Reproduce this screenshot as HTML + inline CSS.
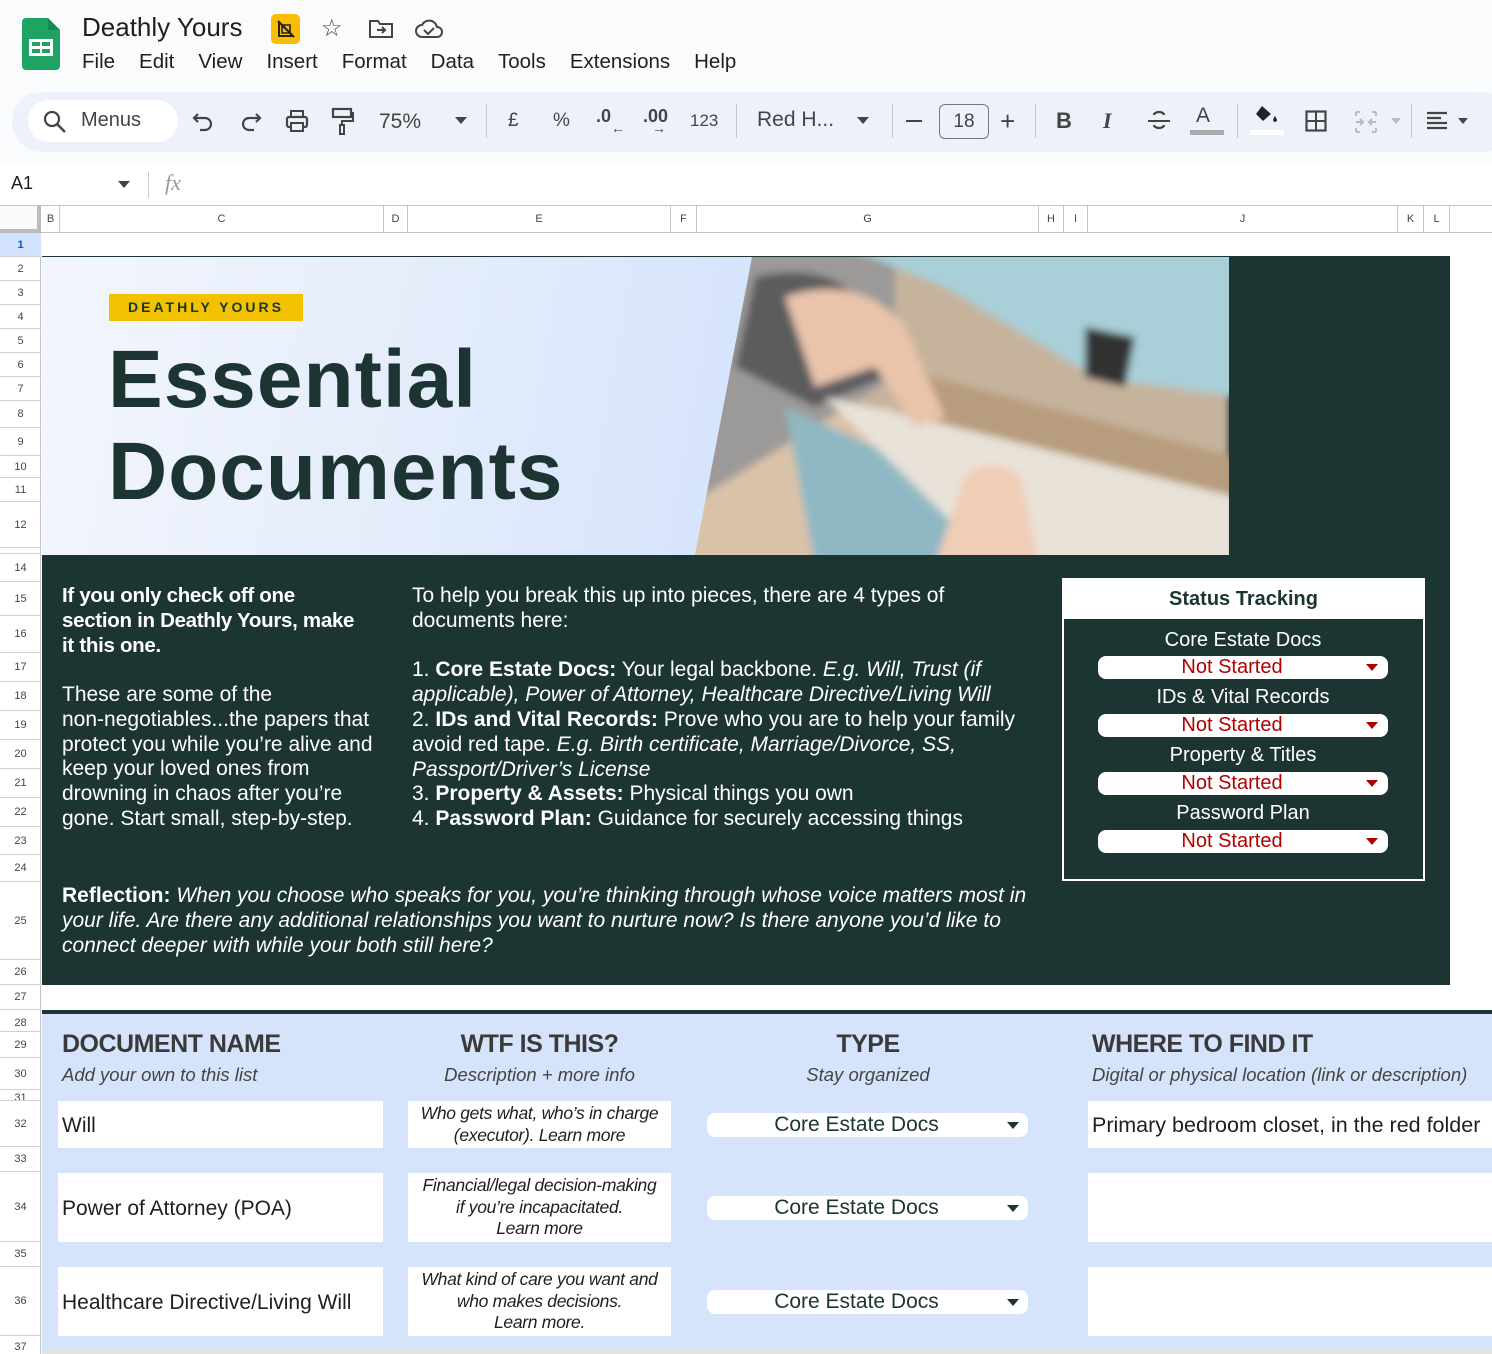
<!DOCTYPE html>
<html><head><meta charset="utf-8"><style>
*{margin:0;padding:0;box-sizing:border-box}
body{width:1492px;height:1354px;overflow:hidden;background:#f9fbfd;font-family:"Liberation Sans",sans-serif;position:relative;color:#1f1f1f}
.a{position:absolute}
.rh{position:absolute;left:0;width:41px;font-size:11px;color:#444;text-align:center;border-bottom:1px solid #d0d0d0}
.ch{position:absolute;top:206px;height:27px;font-size:11px;color:#444;text-align:center;line-height:27px;border-right:1px solid #c8c8c8}
.wt{color:#fff;font-size:21px;line-height:24.8px;white-space:nowrap}
.dd{position:absolute;left:1098px;width:290px;height:23px;background:#fff;border-radius:8px;color:#b00000;font-size:20px;text-align:center;line-height:23px;padding-right:22px}
.dd:after{content:"";position:absolute;right:10px;top:8px;border-left:6px solid transparent;border-right:6px solid transparent;border-top:7px solid #b00000}
.st{position:absolute;left:1064px;width:358px;text-align:center;color:#fff;font-size:20px}
.cell{position:absolute;background:#fff}
.td{position:absolute;left:707px;width:321px;height:24px;background:#fff;border-radius:8px;color:#1c3432;font-size:21px;text-align:center;line-height:24px;padding-right:22px}
.td:after{content:"";position:absolute;right:9px;top:9px;border-left:6px solid transparent;border-right:6px solid transparent;border-top:7px solid #1c3432}
.it{font-style:italic}
.hd{font-weight:bold;font-size:25px;color:#3a3a3a;letter-spacing:-0.5px}
.sub{font-style:italic;font-size:18.5px;color:#444}
.desc{font-size:17.5px;line-height:21.5px;text-align:center;padding-top:2px;letter-spacing:-0.3px;white-space:nowrap;font-style:italic}
</style></head><body>
<svg class="a" style="left:22px;top:18px" width="38" height="52" viewBox="0 0 38 52"><path d="M4 0h22l12 12v36a4 4 0 0 1-4 4H4a4 4 0 0 1-4-4V4a4 4 0 0 1 4-4z" fill="#1ea362"/><path d="M26 0l12 12H26z" fill="#178a51"/><rect x="7" y="21" width="24" height="17" fill="#fff"/><rect x="10" y="24" width="8" height="4" fill="#1ea362"/><rect x="20" y="24" width="8" height="4" fill="#1ea362"/><rect x="10" y="31" width="8" height="4" fill="#1ea362"/><rect x="20" y="31" width="8" height="4" fill="#1ea362"/></svg>
<div class="a" style="left:82px;top:12px;font-size:26px;color:#1f1f1f">Deathly Yours</div>
<div class="a" style="left:271px;top:14px;width:29px;height:30px;background:#fbbc04;border-radius:5px"></div>
<svg class="a" style="left:276px;top:19px" width="20" height="20" viewBox="0 0 20 20"><path d="M3 3v14h14" fill="none" stroke="#222" stroke-width="2"/><path d="M6 6h8v8H6z" fill="none" stroke="#222" stroke-width="1.6"/><path d="M2 2l16 16" stroke="#222" stroke-width="2"/></svg>
<div class="a" style="left:321px;top:14px;font-size:24px;color:#444">☆</div>
<svg class="a" style="left:368px;top:18px" width="26" height="22" viewBox="0 0 26 22"><path d="M2 3h8l2 3h12v13H2z" fill="none" stroke="#444" stroke-width="2"/><path d="M9 12h8M14 9l3 3-3 3" fill="none" stroke="#444" stroke-width="2"/></svg>
<svg class="a" style="left:414px;top:18px" width="30" height="22" viewBox="0 0 30 22"><path d="M8 19a6 6 0 0 1 0-12 8 8 0 0 1 15 2 5 5 0 0 1 0 10z" fill="none" stroke="#444" stroke-width="2"/><path d="M10 12l4 4 6-6" fill="none" stroke="#444" stroke-width="2"/></svg>
<div class="a" style="left:82px;top:50px;font-size:20.5px;color:#1f1f1f">File<span style="margin-left:24px">Edit</span><span style="margin-left:24px">View</span><span style="margin-left:24px">Insert</span><span style="margin-left:24px">Format</span><span style="margin-left:24px">Data</span><span style="margin-left:24px">Tools</span><span style="margin-left:24px">Extensions</span><span style="margin-left:24px">Help</span></div>
<div class="a" style="left:12px;top:92px;width:1500px;height:60px;background:#edf2fa;border-radius:30px"></div>
<div class="a" style="left:28px;top:100px;width:150px;height:42px;background:#fff;border-radius:21px"></div>
<svg class="a" style="left:43px;top:110px" width="24" height="24" viewBox="0 0 24 24"><circle cx="9" cy="9" r="7" fill="none" stroke="#444" stroke-width="2.2"/><path d="M14 14l8 8" stroke="#444" stroke-width="2.4"/></svg>
<div class="a" style="left:81px;top:109px;font-size:20px;color:#444">Menus</div>
<svg class="a" style="left:192px;top:110px" width="24" height="24" viewBox="0 0 24 24"><path d="M6 4L2 8l4 4" fill="none" stroke="#444" stroke-width="2.2"/><path d="M2 8h11a6 6 0 0 1 0 12H8" fill="none" stroke="#444" stroke-width="2.2"/></svg>
<svg class="a" style="left:238px;top:110px" width="24" height="24" viewBox="0 0 24 24"><path d="M18 4l4 4-4 4" fill="none" stroke="#444" stroke-width="2.2"/><path d="M22 8H11a6 6 0 0 0 0 12h5" fill="none" stroke="#444" stroke-width="2.2"/></svg>
<svg class="a" style="left:284px;top:108px" width="26" height="26" viewBox="0 0 26 26"><rect x="3" y="9" width="20" height="10" rx="2" fill="none" stroke="#444" stroke-width="2.2"/><rect x="7" y="3" width="12" height="6" fill="none" stroke="#444" stroke-width="2"/><rect x="7" y="15" width="12" height="8" fill="#edf2fa" stroke="#444" stroke-width="2"/></svg>
<svg class="a" style="left:330px;top:106px" width="24" height="30" viewBox="0 0 24 30"><rect x="3" y="3" width="18" height="8" fill="none" stroke="#444" stroke-width="2.2"/><path d="M21 7h2v8H12v4" fill="none" stroke="#444" stroke-width="2"/><rect x="10" y="19" width="4" height="9" fill="none" stroke="#444" stroke-width="2"/></svg>
<div class="a" style="left:379px;top:110px;font-size:21px;color:#444">75%</div>
<div class="a" style="left:455px;top:117px;border-left:6px solid transparent;border-right:6px solid transparent;border-top:7px solid #444"></div>
<div class="a" style="left:486px;top:104px;width:1px;height:34px;background:#c7c7c7"></div>
<div class="a" style="left:508px;top:110px;font-size:19px;color:#444">£</div>
<div class="a" style="left:553px;top:110px;font-size:19px;color:#444">%</div>
<div class="a" style="left:596px;top:106px;font-size:18px;color:#444;font-weight:bold">.0</div>
<div class="a" style="left:611px;top:120px;font-size:14px;color:#444">←</div>
<div class="a" style="left:643px;top:106px;font-size:18px;color:#444;font-weight:bold">.00</div>
<div class="a" style="left:652px;top:120px;font-size:14px;color:#444">→</div>
<div class="a" style="left:690px;top:111px;font-size:17px;color:#444">123</div>
<div class="a" style="left:736px;top:104px;width:1px;height:34px;background:#c7c7c7"></div>
<div class="a" style="left:757px;top:108px;font-size:21px;color:#444">Red H...</div>
<div class="a" style="left:857px;top:117px;border-left:6px solid transparent;border-right:6px solid transparent;border-top:7px solid #444"></div>
<div class="a" style="left:892px;top:104px;width:1px;height:34px;background:#c7c7c7"></div>
<div class="a" style="left:906px;top:120px;width:16px;height:2px;background:#444"></div>
<div class="a" style="left:939px;top:104px;width:50px;height:35px;border:1px solid #777;border-radius:6px;text-align:center;line-height:33px;font-size:19px;color:#444">18</div>
<div class="a" style="left:1000px;top:106px;font-size:26px;color:#444">+</div>
<div class="a" style="left:1035px;top:104px;width:1px;height:34px;background:#c7c7c7"></div>
<div class="a" style="left:1056px;top:108px;font-size:22px;font-weight:bold;color:#444">B</div>
<div class="a" style="left:1103px;top:108px;font-size:22px;font-style:italic;font-family:'Liberation Serif';font-weight:bold;color:#444">I</div>
<svg class="a" style="left:1147px;top:109px" width="24" height="24" viewBox="0 0 24 24"><path d="M1 12h22" stroke="#444" stroke-width="2"/><path d="M17 6a5 3 0 0 0-10 0M7 16a5 3 0 0 0 10 0" fill="none" stroke="#444" stroke-width="2.2"/></svg>
<div class="a" style="left:1196px;top:104px;font-size:21px;color:#444">A</div>
<div class="a" style="left:1190px;top:130px;width:34px;height:5px;background:#aaa"></div>
<div class="a" style="left:1237px;top:104px;width:1px;height:34px;background:#c7c7c7"></div>
<svg class="a" style="left:1254px;top:104px" width="26" height="24" viewBox="0 0 26 24"><path d="M8 2l-6 8 7 7 8-7z" fill="#222"/><path d="M21 12c-2 3-3 5 0 6 3-1 2-3 0-6z" fill="#222"/></svg>
<div class="a" style="left:1250px;top:130px;width:34px;height:5px;background:#fff"></div>
<svg class="a" style="left:1305px;top:110px" width="22" height="22" viewBox="0 0 22 22"><rect x="1.5" y="1.5" width="19" height="19" fill="none" stroke="#444" stroke-width="2.2"/><path d="M11 1v20M1 11h20" stroke="#444" stroke-width="2"/></svg>
<svg class="a" style="left:1354px;top:110px" width="24" height="24" viewBox="0 0 24 24"><path d="M2 2h4M2 2v4M2 22h4M2 22v-4M22 2h-4M22 2v4M22 22h-4M22 22v-4M2 12h7M6 9l3 3-3 3M22 12h-7M18 9l-3 3 3 3" fill="none" stroke="#bbb" stroke-width="2"/></svg>
<div class="a" style="left:1391px;top:118px;border-left:5px solid transparent;border-right:5px solid transparent;border-top:6px solid #bbb"></div>
<div class="a" style="left:1411px;top:104px;width:1px;height:34px;background:#c7c7c7"></div>
<svg class="a" style="left:1426px;top:110px" width="22" height="22" viewBox="0 0 22 22"><path d="M1 3h20M1 8h14M1 13h20M1 18h20" stroke="#444" stroke-width="2.2"/></svg>
<div class="a" style="left:1458px;top:118px;border-left:5px solid transparent;border-right:5px solid transparent;border-top:6px solid #444"></div>
<div class="a" style="left:0;top:163px;width:1492px;height:43px;background:#fff"></div>
<div class="a" style="left:11px;top:173px;font-size:18px;color:#1f1f1f">A1</div>
<div class="a" style="left:118px;top:181px;border-left:6px solid transparent;border-right:6px solid transparent;border-top:7px solid #444"></div>
<div class="a" style="left:148px;top:172px;width:1px;height:26px;background:#ccc"></div>
<div class="a" style="left:165px;top:170px;font-size:22px;color:#999;font-style:italic;font-family:'Liberation Serif'">fx</div>
<div class="a" style="left:0;top:205px;width:1492px;height:28px;background:#fff;border-top:1px solid #c4c4c4;border-bottom:1px solid #c4c4c4"></div>
<div class="a" style="left:0;top:206px;width:41px;height:27px;background:#f8f9fa;border-right:4px solid #bbb;border-bottom:4px solid #bbb"></div>
<div class="ch" style="left:42px;width:18px">B</div>
<div class="ch" style="left:60px;width:324px">C</div>
<div class="ch" style="left:384px;width:24px">D</div>
<div class="ch" style="left:408px;width:263px">E</div>
<div class="ch" style="left:671px;width:26px">F</div>
<div class="ch" style="left:697px;width:342px">G</div>
<div class="ch" style="left:1039px;width:25px">H</div>
<div class="ch" style="left:1064px;width:24px">I</div>
<div class="ch" style="left:1088px;width:310px">J</div>
<div class="ch" style="left:1398px;width:26px">K</div>
<div class="ch" style="left:1424px;width:26px">L</div>
<div class="a" style="left:42px;top:233px;width:1450px;height:1121px;background:#fff"></div>
<div class="a" style="left:0;top:233px;width:41px;height:1121px;background:#fff;border-right:1px solid #c4c4c4"></div>
<div class="rh" style="top:233px;height:24px;line-height:24px;background:#d3e3fd;color:#0b57d0;font-weight:bold">1</div>
<div class="rh" style="top:257px;height:24px;line-height:24px">2</div>
<div class="rh" style="top:281px;height:24px;line-height:24px">3</div>
<div class="rh" style="top:305px;height:24px;line-height:24px">4</div>
<div class="rh" style="top:329px;height:24px;line-height:24px">5</div>
<div class="rh" style="top:353px;height:24px;line-height:24px">6</div>
<div class="rh" style="top:377px;height:24px;line-height:24px">7</div>
<div class="rh" style="top:401px;height:27px;line-height:27px">8</div>
<div class="rh" style="top:428px;height:28px;line-height:28px">9</div>
<div class="rh" style="top:456px;height:22px;line-height:22px">10</div>
<div class="rh" style="top:478px;height:24px;line-height:24px">11</div>
<div class="rh" style="top:502px;height:46px;line-height:46px">12</div>
<div class="rh" style="top:548px;height:6px;overflow:hidden;line-height:6px"> </div>
<div class="rh" style="top:554px;height:28px;line-height:28px">14</div>
<div class="rh" style="top:582px;height:34px;line-height:34px">15</div>
<div class="rh" style="top:616px;height:37px;line-height:37px">16</div>
<div class="rh" style="top:653px;height:29px;line-height:29px">17</div>
<div class="rh" style="top:682px;height:29px;line-height:29px">18</div>
<div class="rh" style="top:711px;height:29px;line-height:29px">19</div>
<div class="rh" style="top:740px;height:29px;line-height:29px">20</div>
<div class="rh" style="top:769px;height:29px;line-height:29px">21</div>
<div class="rh" style="top:798px;height:29px;line-height:29px">22</div>
<div class="rh" style="top:827px;height:28px;line-height:28px">23</div>
<div class="rh" style="top:855px;height:27px;line-height:27px">24</div>
<div class="rh" style="top:882px;height:78px;line-height:78px">25</div>
<div class="rh" style="top:960px;height:25px;line-height:25px">26</div>
<div class="rh" style="top:985px;height:25px;line-height:25px">27</div>
<div class="rh" style="top:1010px;height:22px;line-height:26px;overflow:hidden">28</div>
<div class="rh" style="top:1032px;height:26px;line-height:26px">29</div>
<div class="rh" style="top:1058px;height:32px;line-height:32px">30</div>
<div class="rh" style="top:1090px;height:11px;line-height:16px;overflow:hidden">31</div>
<div class="rh" style="top:1101px;height:46px;line-height:46px">32</div>
<div class="rh" style="top:1147px;height:25px;line-height:25px">33</div>
<div class="rh" style="top:1172px;height:70px;line-height:70px">34</div>
<div class="rh" style="top:1242px;height:25px;line-height:25px">35</div>
<div class="rh" style="top:1267px;height:69px;line-height:69px">36</div>
<div class="rh" style="top:1336px;height:18px;line-height:22px;overflow:hidden;border:0">37</div>
<div class="a" style="left:42px;top:256px;width:1408px;height:729px;background:#1c3432"></div>
<div class="a" style="left:42px;top:257px;width:720px;height:298px;background:linear-gradient(100deg,#f3f6fc 0%,#e2ebfb 60%,#d3e2fd 100%)"></div>
<svg class="a" style="left:695px;top:257px" width="534" height="298" viewBox="0 0 534 298">
<defs><clipPath id="c"><path d="M57 0H534V298H0z"/></clipPath><filter id="b"><feGaussianBlur stdDeviation="4"/></filter></defs>
<g clip-path="url(#c)"><g filter="url(#b)">
<rect width="534" height="298" fill="#c6b39c"/>
<rect x="-10" y="150" width="210" height="160" fill="#d9c2a8"/>
<path d="M-10 -10h210v130L-10 250z" fill="#9c9a98"/>
<path d="M60 20c40-10 80-5 100 20l30 80-70 30L40 110z" fill="#5b5b5e"/>
<path d="M150 -10h394v150L400 120 250 30z" fill="#a9cfd8"/>
<path d="M90 150l200 90 180 68H120z" fill="#8fb8c3"/>
<path d="M130 140l260 60 150 40v68H300z" fill="#e8e2d8"/>
<path d="M200 110l340 90v40L220 160z" fill="#b79c7d"/>
<path d="M90 40c40-15 90-10 120 30l40 90-30 10-40-60-60 20z" fill="#e9c3aa"/>
<path d="M240 308l30-90c20-15 40-10 55 0l20 90z" fill="#f0cdb6"/>
<path d="M390 70l50 10-10 50-40-10z" fill="#333"/>
</g></g></svg>
<div class="a" style="left:109px;top:294px;width:194px;height:27px;background:#f2c200;color:#1c3432;font-weight:bold;font-size:14px;letter-spacing:3px;text-align:center;line-height:27px">DEATHLY YOURS</div>
<div class="a" style="left:108px;top:334px;font-size:82px;font-weight:bold;color:#1c3432;line-height:92px;letter-spacing:1px">Essential<br>Documents</div>
<div class="a wt" style="left:62px;top:584px;font-weight:bold;font-size:20.5px;letter-spacing:-0.3px">If you only check off one<br>section in Deathly Yours, make<br>it this one.</div>
<div class="a wt" style="left:62px;top:683px">These are some of the<br>non-negotiables...the papers that<br>protect you while you’re alive and<br>keep your loved ones from<br>drowning in chaos after you’re<br>gone. Start small, step-by-step.</div>
<div class="a wt" style="left:412px;top:584px">To help you break this up into pieces, there are 4 types of<br>documents here:<br><br>1. <b>Core Estate Docs:</b> Your legal backbone. <i>E.g. Will, Trust (if</i><br><i>applicable), Power of Attorney, Healthcare Directive/Living Will</i><br>2. <b>IDs and Vital Records:</b> Prove who you are to help your family<br>avoid red tape. <i>E.g. Birth certificate, Marriage/Divorce, SS,</i><br><i>Passport/Driver’s License</i><br>3. <b>Property &amp; Assets:</b> Physical things you own<br>4. <b>Password Plan:</b> Guidance for securely accessing things</div>
<div class="a wt" style="left:62px;top:884px"><b>Reflection:</b> <i>When you choose who speaks for you, you’re thinking through whose voice matters most in<br>your life. Are there any additional relationships you want to nurture now? Is there anyone you’d like to<br>connect deeper with while your both still here?</i></div>
<div class="a" style="left:1062px;top:578px;width:363px;height:303px;border:2px solid #fff"></div>
<div class="a" style="left:1064px;top:580px;width:359px;height:39px;background:#fff;text-align:center;line-height:39px;font-weight:bold;font-size:20px;color:#1c3432">Status Tracking</div>
<div class="st" style="top:629px">Core Estate Docs</div>
<div class="dd" style="top:656px">Not Started</div>
<div class="st" style="top:686px">IDs &amp; Vital Records</div>
<div class="dd" style="top:714px">Not Started</div>
<div class="st" style="top:744px">Property &amp; Titles</div>
<div class="dd" style="top:772px">Not Started</div>
<div class="st" style="top:802px">Password Plan</div>
<div class="dd" style="top:830px">Not Started</div>
<div class="a" style="left:42px;top:1010px;width:1450px;height:344px;background:#d6e4fb;border-top:4px solid #1c3432"></div>
<div class="a hd" style="left:62px;top:1030px">DOCUMENT NAME</div>
<div class="a sub" style="left:62px;top:1064px">Add your own to this list</div>
<div class="a hd" style="left:408px;top:1030px;width:263px;text-align:center">WTF IS THIS?</div>
<div class="a sub" style="left:408px;top:1064px;width:263px;text-align:center">Description + more info</div>
<div class="a hd" style="left:697px;top:1030px;width:342px;text-align:center">TYPE</div>
<div class="a sub" style="left:697px;top:1064px;width:342px;text-align:center">Stay organized</div>
<div class="a hd" style="left:1092px;top:1030px">WHERE TO FIND IT</div>
<div class="a sub" style="left:1092px;top:1064px;white-space:nowrap">Digital or physical location (link or description)</div>
<div class="cell" style="left:58px;top:1101px;width:325px;height:47px;font-size:21px;line-height:49px;padding-left:4px">Will</div>
<div class="cell" style="left:58px;top:1173px;width:325px;height:69px;font-size:21px;line-height:72px;padding-left:4px">Power of Attorney (POA)</div>
<div class="cell" style="left:58px;top:1267px;width:325px;height:69px;font-size:21px;line-height:72px;padding-left:4px;white-space:nowrap">Healthcare Directive/Living Will</div>
<div class="cell desc" style="left:408px;top:1101px;width:263px;height:47px">Who gets what, who’s in charge<br>(executor). Learn more</div>
<div class="cell desc" style="left:408px;top:1173px;width:263px;height:69px">Financial/legal decision-making<br>if you’re incapacitated.<br>Learn more</div>
<div class="cell desc" style="left:408px;top:1267px;width:263px;height:69px">What kind of care you want and<br>who makes decisions.<br>Learn more.</div>
<div class="td" style="top:1113px">Core Estate Docs</div>
<div class="td" style="top:1196px">Core Estate Docs</div>
<div class="td" style="top:1290px">Core Estate Docs</div>
<div class="cell" style="left:1088px;top:1101px;width:404px;height:47px;font-size:21.5px;line-height:49px;padding-left:4px;white-space:nowrap">Primary bedroom closet, in the red folder</div>
<div class="cell" style="left:1088px;top:1173px;width:404px;height:69px"></div>
<div class="cell" style="left:1088px;top:1267px;width:404px;height:69px"></div>
<div class="a" style="left:42px;top:1349px;width:1450px;height:5px;background:#e3e3e3"></div>
</body></html>
